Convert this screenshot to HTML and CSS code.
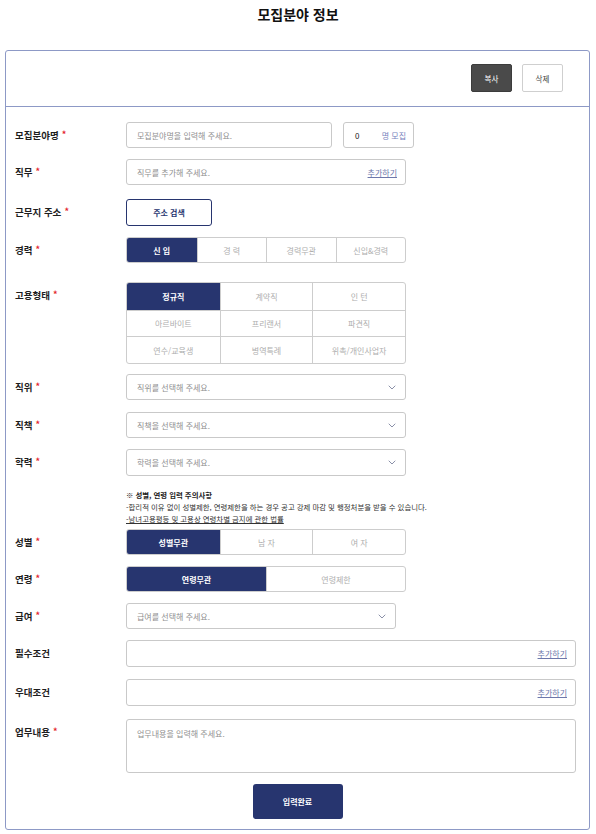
FILE: index.html
```html
<!DOCTYPE html>
<html lang="ko">
<head>
<meta charset="utf-8">
<title>모집분야 정보</title>
<link rel="stylesheet" href="styles.css">
</head>
<body>
<h1 class="title">모집분야 정보</h1>
<div class="card">
  <div class="card-head">
    <button class="btn-copy">복사</button>
    <button class="btn-del">삭제</button>
  </div>
  <div class="form">
    <div class="row">
      <div class="label">모집분야명 <span class="req">*</span></div>
      <div class="ctrl">
        <div class="input w206"><span class="ph">모집분야명을 입력해 주세요.</span></div>
        <div class="input count"><span class="num">0</span><span class="unit">명 모집</span></div>
      </div>
    </div>
    <div class="row">
      <div class="label">직무 <span class="req">*</span></div>
      <div class="input w280 between"><span class="ph">직무를 추가해 주세요.</span><span class="add">추가하기</span></div>
    </div>
    <div class="row r-addr">
      <div class="label">근무지 주소 <span class="req">*</span></div>
      <button class="btn-addr">주소 검색</button>
    </div>
    <div class="row">
      <div class="label">경력 <span class="req">*</span></div>
      <div class="seg w280 seg4">
        <div class="opt on">신 입</div><div class="opt">경 력</div><div class="opt">경력무관</div><div class="opt">신입&amp;경력</div>
      </div>
    </div>
    <div class="row r-emp">
      <div class="label">고용형태 <span class="req">*</span></div>
      <div class="grid w280">
        <div class="cell on">정규직</div><div class="cell">계약직</div><div class="cell">인 턴</div>
        <div class="cell">아르바이트</div><div class="cell">프리랜서</div><div class="cell">파견직</div>
        <div class="cell">연수/교육생</div><div class="cell">병역특례</div><div class="cell">위촉/개인사업자</div>
      </div>
    </div>
    <div class="row r-pos">
      <div class="label">직위 <span class="req">*</span></div>
      <div class="input w280 between"><span class="ph">직위를 선택해 주세요.</span><svg class="chev" viewBox="0 0 8 5" width="8" height="5"><polyline points="1,1 4,4 7,1"/></svg></div>
    </div>
    <div class="row r-duty">
      <div class="label">직책 <span class="req">*</span></div>
      <div class="input w280 between"><span class="ph">직책을 선택해 주세요.</span><svg class="chev" viewBox="0 0 8 5" width="8" height="5"><polyline points="1,1 4,4 7,1"/></svg></div>
    </div>
    <div class="row">
      <div class="label">학력 <span class="req">*</span></div>
      <div class="input w280 h27 between"><span class="ph">학력을 선택해 주세요.</span><svg class="chev" viewBox="0 0 8 5" width="8" height="5"><polyline points="1,1 4,4 7,1"/></svg></div>
    </div>
    <div class="notice">
      <p class="notice-title">※ 성별, 연령 입력 주의사항</p>
      <p>-합리적 이유 없이 성별제한, 연령제한을 하는 경우 공고 강제 마감 및 행정처분을 받을 수 있습니다.</p>
      <p><span class="law">-남녀고용평등 및 고용상 연령차별 금지에 관한 법률</span></p>
    </div>
    <div class="row r-sex">
      <div class="label">성별 <span class="req">*</span></div>
      <div class="seg w280 seg3">
        <div class="opt on">성별무관</div><div class="opt">남 자</div><div class="opt">여 자</div>
      </div>
    </div>
    <div class="row">
      <div class="label">연령 <span class="req">*</span></div>
      <div class="seg w280 h27 seg2">
        <div class="opt on">연령무관</div><div class="opt">연령제한</div>
      </div>
    </div>
    <div class="row">
      <div class="label">급여 <span class="req">*</span></div>
      <div class="input w270 between"><span class="ph">급여를 선택해 주세요.</span><svg class="chev" viewBox="0 0 8 5" width="8" height="5"><polyline points="1,1 4,4 7,1"/></svg></div>
    </div>
    <div class="row">
      <div class="label">필수조건</div>
      <div class="input w450 h27 end"><span class="add">추가하기</span></div>
    </div>
    <div class="row r-pref">
      <div class="label">우대조건</div>
      <div class="input w450 h27 end"><span class="add">추가하기</span></div>
    </div>
    <div class="row r-task">
      <div class="label">업무내용 <span class="req">*</span></div>
      <div class="textarea w450"><span class="ph">업무내용을 입력해 주세요.</span></div>
    </div>
    <div class="submit-wrap">
      <button class="btn-submit">입력완료</button>
    </div>
  </div>
</div>
</body>
</html>
```

FILE: styles.css
```css
* { box-sizing: border-box; }
html, body { margin: 0; padding: 0; background: #fff; }
body {
  font-family: "Noto Sans CJK KR", "Noto Sans", sans-serif;
  color: #222;
}
p { margin: 0; }
button { font-family: inherit; cursor: pointer; padding: 0; }

.title {
  margin: 0;
  height: 50px;
  padding-top: 4px;
  text-align: center;
  font-size: 14px;
  line-height: 20px;
  font-weight: 700;
  color: #111;
}

.card {
  margin-left: 5px;
  width: 585px;
  border: 1px solid #8d99c6;
  border-radius: 3px;
}

.card-head {
  height: 56px;
  border-bottom: 1px solid #8d99c6;
  display: flex;
  justify-content: flex-end;
  align-items: flex-start;
  gap: 10px;
  padding: 13px 26px 0 0;
}
.btn-copy, .btn-del {
  width: 41px;
  height: 28px;
  border-radius: 2px;
  font-size: 7.5px;
}
.btn-copy { background: #4a4a4a; color: #fff; border: 1px solid #3c3c3c; }
.btn-del { background: #fff; color: #444; border: 1px solid #cfcfcf; }

.form {
  display: flex;
  flex-direction: column;
  gap: 11px;
  padding: 15px 0 10px 9px;
}

.row { display: flex; align-items: flex-start; }
.r-addr { margin-top: 3px; }
.r-emp { margin-top: 8px; }
.r-pos { margin-top: -1px; }
.r-duty { margin-top: 1px; }
.r-sex { margin-top: -7px; }
.r-pref { margin-top: 1px; }
.r-task { margin-top: 2px; }

.label {
  width: 111px;
  height: 26px;
  flex: none;
  display: flex;
  align-items: center;
  gap: 3px;
  font-size: 9.5px;
  font-weight: 700;
  line-height: 12px;
  color: #1e1e1e;
  white-space: nowrap;
}
.req { color: #e4262c; font-weight: 700; font-size: 9px; line-height: 12px; }

.ctrl { display: flex; gap: 11px; }

.input {
  height: 26px;
  border: 1px solid #c9c9c9;
  border-radius: 3px;
  display: flex;
  align-items: center;
  padding: 0 10px;
  font-size: 8px;
}
.h27 { height: 27px; }
.between { justify-content: space-between; }
.end { justify-content: flex-end; padding-right: 8px; }
.w206 { width: 206px; }
.w270 { width: 270px; }
.w280 { width: 280px; }
.w450 { width: 450px; }
.ph { color: #8f8f8f; }
.count { width: 71px; justify-content: space-between; padding: 0 7px 0 11px; }
.num { color: #222; font-size: 8px; }
.unit { color: #7682bd; }
.add { color: #6d78ab; text-decoration: underline; text-underline-offset: 1px; }
.input.between .add { margin-right: -2px; }

.chev { fill: none; stroke: #8a90a8; stroke-width: 1; stroke-linecap: round; stroke-linejoin: round; margin-right: -1px; }

.btn-addr {
  width: 86px;
  height: 27px;
  background: #fff;
  border: 1.5px solid #27356f;
  border-radius: 3px;
  color: #27356f;
  font-size: 8px;
  font-weight: 700;
}

.seg {
  height: 26px;
  border: 1px solid #cdcdcd;
  border-radius: 3px;
  overflow: hidden;
  display: grid;
}
.seg4 { grid-template-columns: repeat(4, 1fr); }
.seg3 { grid-template-columns: repeat(3, 1fr); }
.seg2 { grid-template-columns: repeat(2, 1fr); }
.opt {
  display: flex;
  align-items: center;
  justify-content: center;
  font-size: 8px;
  color: #aeaeae;
  border-left: 1px solid #cdcdcd;
}
.opt:first-child { border-left: none; }
.opt.on, .cell.on { background: #27356f; color: #fff; font-weight: 700; }

.grid {
  height: 82px;
  border: 1px solid #cdcdcd;
  border-radius: 3px;
  overflow: hidden;
  display: grid;
  grid-template-columns: repeat(3, 1fr);
  grid-template-rows: repeat(3, 1fr);
}
.cell {
  display: flex;
  align-items: center;
  justify-content: center;
  font-size: 8px;
  color: #aeaeae;
  border-left: 1px solid #cdcdcd;
  border-top: 1px solid #cdcdcd;
}
.cell:nth-child(3n+1) { border-left: none; }
.cell:nth-child(-n+3) { border-top: none; }

.notice {
  margin-top: 2px;
  padding-left: 111px;
  font-size: 7.4px;
  line-height: 12px;
  color: #333;
}
.notice-title { font-weight: 700; color: #222; }
.law { text-decoration: underline; }

.textarea {
  height: 54px;
  border: 1px solid #c9c9c9;
  border-radius: 3px;
  padding: 8px 10px;
  font-size: 8px;
  line-height: 12px;
}

.submit-wrap {
  display: flex;
  justify-content: center;
  padding-right: 9px;
}
.btn-submit {
  width: 90px;
  height: 35px;
  background: #27356f;
  color: #fff;
  border: none;
  border-radius: 3px;
  font-size: 8px;
  font-weight: 700;
}
```
